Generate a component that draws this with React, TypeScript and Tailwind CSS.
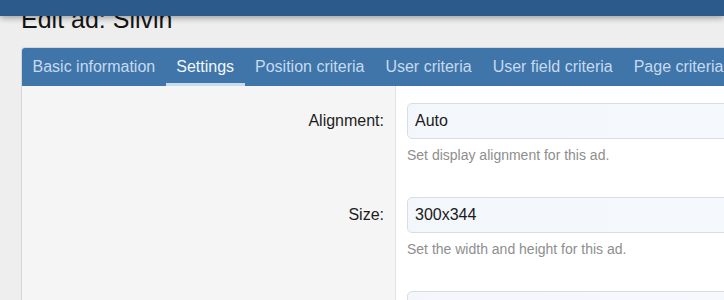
const tabs = [
  'Basic information',
  'Settings',
  'Position criteria',
  'User criteria',
  'User field criteria',
  'Page criteria',
  'Advanced',
];

const rows = [
  { label: 'Alignment:', value: 'Auto', hint: 'Set display alignment for this ad.' },
  { label: 'Size:', value: '300x344', hint: 'Set the width and height for this ad.' },
  { label: '', value: '', hint: '' },
];

export default function App() {
  return (
    <div
      className="relative w-[724px] h-[300px] overflow-hidden bg-[#eeeeee]"
      style={{ fontFamily: '"Liberation Sans", Arial, sans-serif' }}
    >
      {/* Header bar sits over the scrolled page */}
      <div className="absolute top-0 left-0 right-0 z-10 h-[16px] bg-[#2c5a8a] shadow-[0_2px_6px_rgba(0,0,0,0.35)]" />

      <div className="pl-[21px] pt-[7px]">
        <h1 className="text-[25px] leading-[25px] text-[#141414] whitespace-nowrap">Edit ad: Silvin</h1>

        <div className="mt-[15px] w-[900px] rounded-t-[4px] border border-[#d6d6d6] overflow-hidden">
          {/* Tabs */}
          <div className="flex h-[38px] bg-[#3f75a8] text-[16px] whitespace-nowrap">
            {tabs.map((t) => (
              <div
                key={t}
                className={
                  t === 'Settings'
                    ? 'flex items-center px-[10.5px] pt-[3px] border-b-[3px] border-[#c8dcf0] text-[#f2f7fc]'
                    : 'flex items-center px-[10.5px] pt-[3px] border-b-[3px] border-transparent text-[#c6daf0]'
                }
              >
                {t}
              </div>
            ))}
          </div>

          {/* Form body */}
          <div className="flex">
            <div className="w-[374px] shrink-0 bg-[#f5f5f5] border-r border-[#e2e2e2] pt-[17px] pr-[11px]">
              {rows.map((r, i) => (
                <div key={i} className="h-[94px]">
                  <div className="h-[36px] flex items-center justify-end text-[16px] text-[#1e1e1e]">{r.label}</div>
                </div>
              ))}
            </div>
            <div className="flex-1 bg-white pt-[17px] pl-[11px]">
              {rows.map((r, i) => (
                <div key={i} className="h-[94px]">
                  <div className="h-[36px] flex items-center rounded-[5px] border border-[#d8dde3] bg-gradient-to-r from-[#f3f7fc] to-[#f7f9fc] pl-[7px] text-[16px] text-[#1a1a1a]">
                    {r.value}
                  </div>
                  {r.hint && <div className="mt-[6px] text-[14px] leading-[20px] text-[#8e8e8e]">{r.hint}</div>}
                </div>
              ))}
            </div>
          </div>
        </div>
      </div>
    </div>
  );
}
